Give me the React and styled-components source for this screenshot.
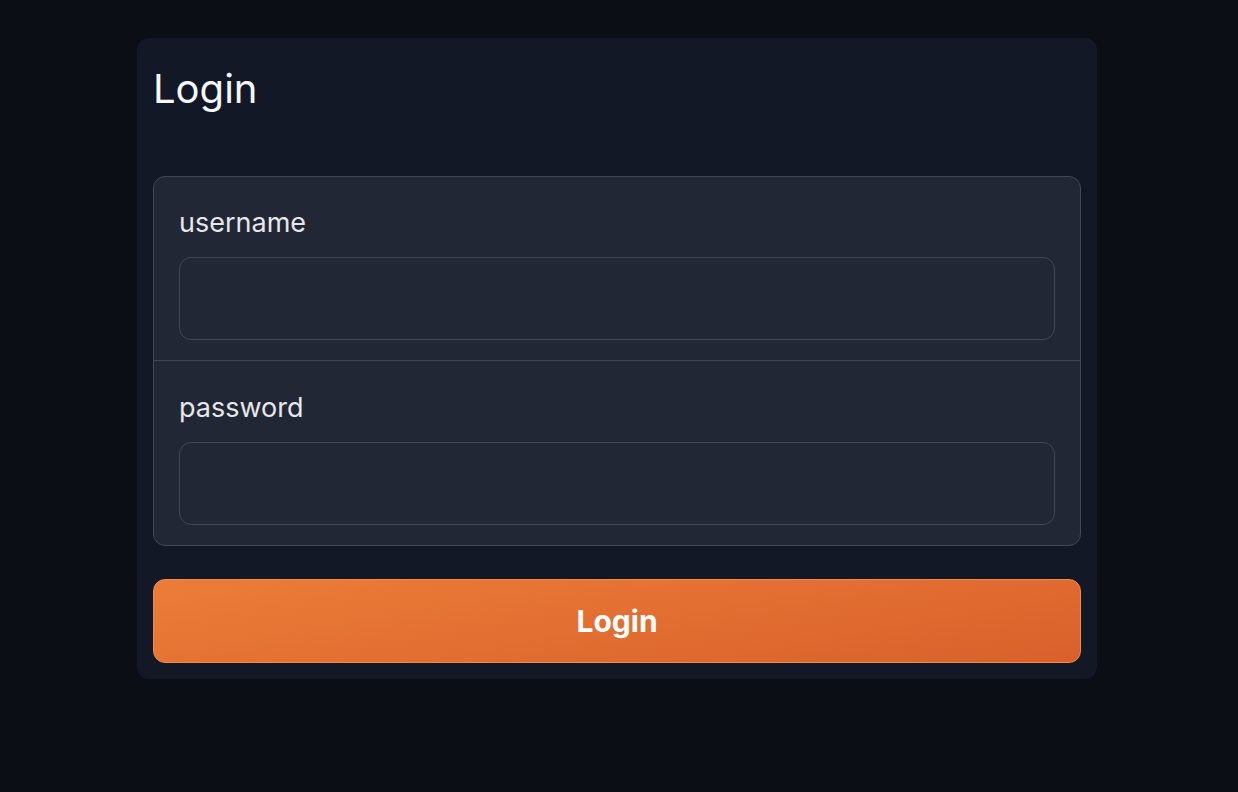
import React from "react";
import styled, { createGlobalStyle } from "styled-components";

const Global = createGlobalStyle`
  html, body { margin: 0; padding: 0; background: #0b0e14; }
  body { font-family: Inter, "Noto Sans", "Liberation Sans", sans-serif; }
  * { box-sizing: border-box; }
`;

const Page = styled.div`
  min-height: 792px;
  padding: 38px 0 0 137px;
`;

const Card = styled.form`
  width: 960px;
  background: #121826;
  border-radius: 12px;
  padding: 16px;
  display: flex;
  flex-direction: column;
`;

const Title = styled.h1`
  margin: 11px 0 63px;
  font-size: 40px;
  line-height: 48px;
  font-weight: 400;
  color: #f5f6f8;
`;

const FieldGroup = styled.div`
  background: #222735;
  border: 1px solid #414755;
  border-radius: 12px;
  display: flex;
  flex-direction: column;
  overflow: hidden;
`;

const Field = styled.div`
  padding: ${(p) => (p.$divided ? "29px 25px 20px" : "28px 25px 20px")};
  display: flex;
  flex-direction: column;
  gap: 16px;
  border-top: ${(p) => (p.$divided ? "1px solid #414755" : "none")};
`;

const Label = styled.label`
  font-size: 27px;
  line-height: 36px;
  color: #e6e8ec;
`;

const Input = styled.input`
  height: 83px;
  width: 100%;
  background: #222735;
  border: 1px solid #414755;
  border-radius: 12px;
  color: #e6e8ec;
  font-size: 24px;
  padding: 0 20px;
  outline: none;
  font-family: inherit;
`;

const Button = styled.button`
  margin-top: 33px;
  height: 84px;
  width: 100%;
  border-radius: 12px;
  border: 1px solid #f28c45;
  background: linear-gradient(170deg, #ec7d38 0%, #d9602b 100%);
  color: #ffffff;
  font-family: inherit;
  font-size: 30px;
  font-weight: 700;
  cursor: pointer;
`;

export default function App() {
  return (
    <Page>
      <Global />
      <Card onSubmit={(e) => e.preventDefault()}>
        <Title>Login</Title>
        <FieldGroup>
          <Field>
            <Label htmlFor="username">username</Label>
            <Input id="username" type="text" />
          </Field>
          <Field $divided>
            <Label htmlFor="password">password</Label>
            <Input id="password" type="password" />
          </Field>
        </FieldGroup>
        <Button type="submit">Login</Button>
      </Card>
    </Page>
  );
}
